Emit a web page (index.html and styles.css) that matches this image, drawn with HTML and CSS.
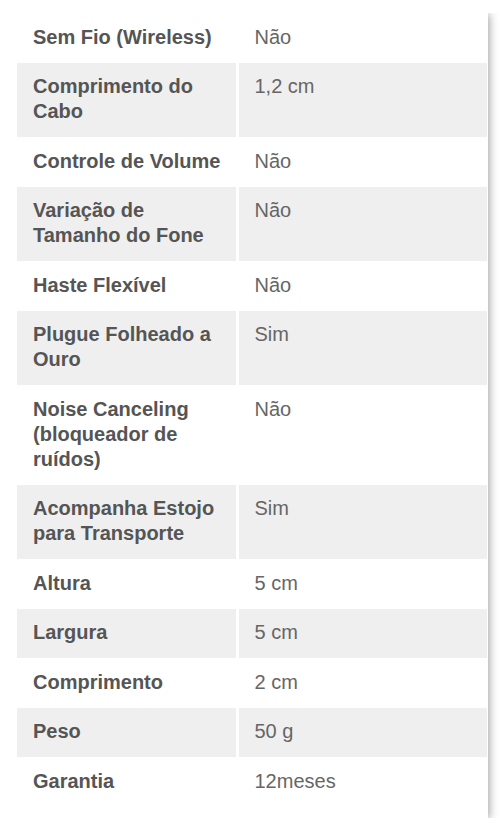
FILE: index.html
```html
<!DOCTYPE html>
<html lang="pt-BR">
<head>
    <meta charset="UTF-8">
    <meta name="viewport" content="width=device-width, initial-scale=1.0">
    <title>Especificações</title>
    <link rel="stylesheet" href="styles.css">
</head>
<body>

    <div class="card">
        <table class="specs">
            <colgroup>
                <col class="col-label">
                <col class="col-value">
            </colgroup>
            <tr>
                <td class="label">Sem Fio (Wireless)</td>
                <td class="value">Não</td>
            </tr>
            <tr>
                <td class="label">Comprimento do Cabo</td>
                <td class="value">1,2 cm</td>
            </tr>
            <tr>
                <td class="label">Controle de Volume</td>
                <td class="value">Não</td>
            </tr>
            <tr>
                <td class="label">Variação de Tamanho do Fone</td>
                <td class="value">Não</td>
            </tr>
            <tr>
                <td class="label">Haste Flexível</td>
                <td class="value">Não</td>
            </tr>
            <tr>
                <td class="label">Plugue Folheado a Ouro</td>
                <td class="value">Sim</td>
            </tr>
            <tr>
                <td class="label">Noise Canceling (bloqueador de ruídos)</td>
                <td class="value">Não</td>
            </tr>
            <tr>
                <td class="label">Acompanha Estojo para Transporte</td>
                <td class="value">Sim</td>
            </tr>
            <tr>
                <td class="label">Altura</td>
                <td class="value">5 cm</td>
            </tr>
            <tr>
                <td class="label">Largura</td>
                <td class="value">5 cm</td>
            </tr>
            <tr>
                <td class="label">Comprimento</td>
                <td class="value">2 cm</td>
            </tr>
            <tr>
                <td class="label">Peso</td>
                <td class="value">50 g</td>
            </tr>
            <tr>
                <td class="label">Garantia</td>
                <td class="value">12meses</td>
            </tr>
        </table>
    </div>

</body>
</html>
```

FILE: styles.css
```css
body {
    font-family: "Liberation Sans", Arial, sans-serif;
    background-color: #fff;
    margin: 13px 0 0 14px;
    padding: 0;
}

.card {
    background: #fff;
    width: 470px;
    padding: 0 1px 11.5px 3px;
    box-shadow: 1px 1px 9px rgba(0, 0, 0, 0.4);
}

.specs {
    width: 470px;
    border-collapse: collapse;
    table-layout: fixed;
}

.col-label {
    width: 220px;
}

.col-value {
    width: 250px;
}

.specs td {
    font-size: 20px;
    line-height: 25px;
    padding: 11.5px 16px 13px 16px;
    vertical-align: top;
}

.specs tr:nth-child(even) td {
    background: #efefef;
}

.label {
    font-weight: bold;
    color: #555;
    border-right: 3px solid #fff;
    padding-right: 6px !important;
}

.value {
    color: #666;
    padding-left: 16px !important;
}
```
